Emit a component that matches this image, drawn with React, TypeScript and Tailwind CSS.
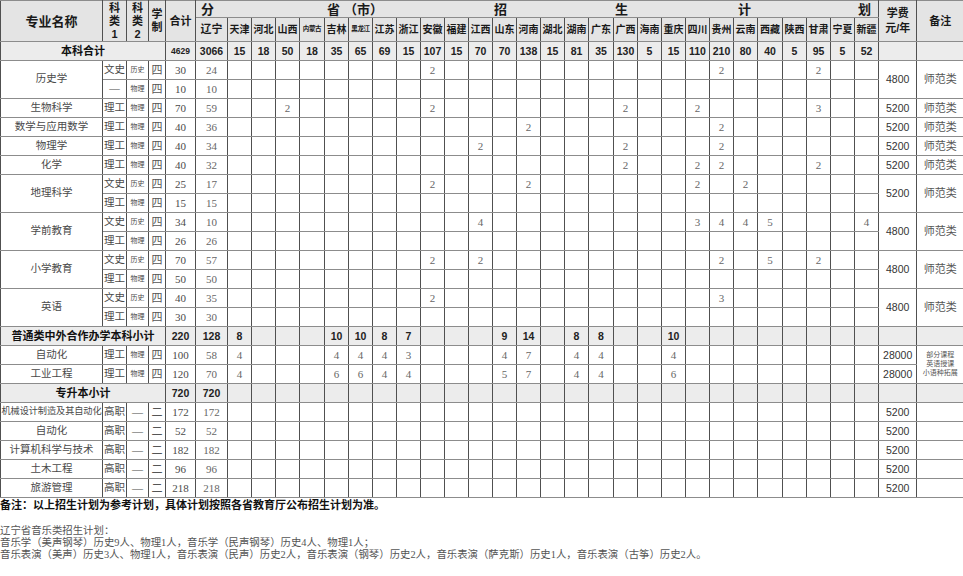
import React from "react";

const P = ["辽宁","天津","河北","山西","内蒙古","吉林","黑龙江","江苏","浙江","安徽","福建","江西","山东","河南","湖北","湖南","广东","广西","海南","重庆","四川","贵州","云南","西藏","陕西","甘肃","宁夏","新疆"];
const W25 = new Set(["内蒙古","广东","西藏"]);

type Row =
  | {
      kind: "row";
      name?: string;
      nameSpan?: number;
      small?: boolean;
      k1: string;
      k2: string;
      xz: string;
      total: string;
      v: Record<string, string>;
      fee?: string;
      feeSpan?: number;
      note?: React.ReactNode;
      noteSpan?: number;
    }
  | { kind: "sub"; label: string; total: string; v: Record<string, string>; smallTotal?: boolean };

const note2 = (
  <div className="flex flex-col items-center text-[7px] leading-[9px]">
    <span>部分课程</span>
    <span>英语授课</span>
    <span>小语种拓展</span>
  </div>
);

const rows: Row[] = [
  {
    kind: "sub",
    label: "本科合计",
    total: "4629",
    smallTotal: true,
    v: { 辽宁: "3066", 天津: "15", 河北: "18", 山西: "50", 内蒙古: "18", 吉林: "35", 黑龙江: "65", 江苏: "69", 浙江: "15", 安徽: "107", 福建: "15", 江西: "70", 山东: "70", 河南: "138", 湖北: "15", 湖南: "81", 广东: "35", 广西: "130", 海南: "5", 重庆: "15", 四川: "110", 贵州: "210", 云南: "80", 西藏: "40", 陕西: "5", 甘肃: "95", 宁夏: "5", 新疆: "52" },
  },
  { kind: "row", name: "历史学", nameSpan: 2, k1: "文史", k2: "历史", xz: "四", total: "30", v: { 辽宁: "24", 安徽: "2", 贵州: "2", 甘肃: "2" }, fee: "4800", feeSpan: 2, note: "师范类", noteSpan: 2 },
  { kind: "row", k1: "—", k2: "物理", xz: "四", total: "10", v: { 辽宁: "10" } },
  { kind: "row", name: "生物科学", k1: "理工", k2: "物理", xz: "四", total: "70", v: { 辽宁: "59", 山西: "2", 安徽: "2", 广西: "2", 四川: "2", 甘肃: "3" }, fee: "5200", note: "师范类" },
  { kind: "row", name: "数学与应用数学", k1: "理工", k2: "物理", xz: "四", total: "40", v: { 辽宁: "36", 河南: "2", 贵州: "2" }, fee: "5200", note: "师范类" },
  { kind: "row", name: "物理学", k1: "理工", k2: "物理", xz: "四", total: "40", v: { 辽宁: "34", 江西: "2", 广西: "2", 贵州: "2" }, fee: "5200", note: "师范类" },
  { kind: "row", name: "化学", k1: "理工", k2: "物理", xz: "四", total: "40", v: { 辽宁: "32", 广西: "2", 四川: "2", 贵州: "2", 甘肃: "2" }, fee: "5200", note: "师范类" },
  { kind: "row", name: "地理科学", nameSpan: 2, k1: "文史", k2: "历史", xz: "四", total: "25", v: { 辽宁: "17", 安徽: "2", 河南: "2", 四川: "2", 云南: "2" }, fee: "5200", feeSpan: 2, note: "师范类", noteSpan: 2 },
  { kind: "row", k1: "理工", k2: "物理", xz: "四", total: "15", v: { 辽宁: "15" } },
  { kind: "row", name: "学前教育", nameSpan: 2, k1: "文史", k2: "历史", xz: "四", total: "34", v: { 辽宁: "10", 江西: "4", 四川: "3", 贵州: "4", 云南: "4", 西藏: "5", 新疆: "4" }, fee: "4800", feeSpan: 2, note: "师范类", noteSpan: 2 },
  { kind: "row", k1: "理工", k2: "物理", xz: "四", total: "26", v: { 辽宁: "26" } },
  { kind: "row", name: "小学教育", nameSpan: 2, k1: "文史", k2: "历史", xz: "四", total: "70", v: { 辽宁: "57", 安徽: "2", 江西: "2", 贵州: "2", 西藏: "5", 甘肃: "2" }, fee: "4800", feeSpan: 2, note: "师范类", noteSpan: 2 },
  { kind: "row", k1: "理工", k2: "物理", xz: "四", total: "50", v: { 辽宁: "50" } },
  { kind: "row", name: "英语", nameSpan: 2, k1: "文史", k2: "历史", xz: "四", total: "40", v: { 辽宁: "35", 安徽: "2", 贵州: "3" }, fee: "4800", feeSpan: 2, note: "师范类", noteSpan: 2 },
  { kind: "row", k1: "理工", k2: "物理", xz: "四", total: "30", v: { 辽宁: "30" } },
  {
    kind: "sub",
    label: "普通类中外合作办学本科小计",
    total: "220",
    v: { 辽宁: "128", 天津: "8", 吉林: "10", 黑龙江: "10", 江苏: "8", 浙江: "7", 山东: "9", 河南: "14", 湖南: "8", 广东: "8", 重庆: "10" },
  },
  { kind: "row", name: "自动化", k1: "理工", k2: "物理", xz: "四", total: "100", v: { 辽宁: "58", 天津: "4", 吉林: "4", 黑龙江: "4", 江苏: "4", 浙江: "3", 山东: "4", 河南: "7", 湖南: "4", 广东: "4", 重庆: "4" }, fee: "28000", note: note2, noteSpan: 2 },
  { kind: "row", name: "工业工程", k1: "理工", k2: "物理", xz: "四", total: "120", v: { 辽宁: "70", 天津: "4", 吉林: "6", 黑龙江: "6", 江苏: "4", 浙江: "4", 山东: "5", 河南: "7", 湖南: "4", 广东: "4", 重庆: "6" }, fee: "28000" },
  { kind: "sub", label: "专升本小计", total: "720", v: { 辽宁: "720" } },
  { kind: "row", name: "机械设计制造及其自动化", small: true, k1: "高职", k2: "—", xz: "二", total: "172", v: { 辽宁: "172" }, fee: "5200", note: "" },
  { kind: "row", name: "自动化", k1: "高职", k2: "—", xz: "二", total: "52", v: { 辽宁: "52" }, fee: "5200", note: "" },
  { kind: "row", name: "计算机科学与技术", k1: "高职", k2: "—", xz: "二", total: "182", v: { 辽宁: "182" }, fee: "5200", note: "" },
  { kind: "row", name: "土木工程", k1: "高职", k2: "—", xz: "二", total: "96", v: { 辽宁: "96" }, fee: "5200", note: "" },
  { kind: "row", name: "旅游管理", k1: "高职", k2: "—", xz: "二", total: "218", v: { 辽宁: "218" }, fee: "5200", note: "" },
];

const cell = "p-0 text-center align-middle border border-x-[#505050] border-y-[#8c8c8c] leading-none overflow-hidden";
const cjk = "font-['Liberation_Sans','Noto_Sans_CJK_SC',sans-serif]";
const serifCjk = "font-['Liberation_Serif','Noto_Sans_CJK_SC',serif]";
const num = "font-['Liberation_Serif','Noto_Sans_CJK_SC',serif]";
const bnum = "font-['Liberation_Sans','Noto_Sans_CJK_SC',sans-serif] font-bold";

export default function App() {
  return (
    <div className="w-[963px] h-[576px] bg-white overflow-hidden text-[#222]">
      <table className="table-fixed border-collapse w-[963px]">
        <colgroup>
          <col className="w-[102px]" />
          <col className="w-[24px]" />
          <col className="w-[22px]" />
          <col className="w-[17px]" />
          <col className="w-[30px]" />
          {P.map((p) => (
            <col key={p} className={p === "辽宁" ? "w-[32px]" : W25.has(p) ? "w-[25px]" : "w-[24px]"} />
          ))}
          <col className="w-[38px]" />
          <col className="w-[47px]" />
        </colgroup>
        <thead className={`bg-[#e4e4e4] ${cjk} font-bold text-[#1a1a1a]`}>
          <tr className="h-[17px]">
            <th rowSpan={2} className={`${cell} text-[13px]`}>专业名称</th>
            <th rowSpan={2} className={`${cell} text-[11px]`}>
              <div className="flex flex-col items-center leading-[13px]">
                <span>科</span>
                <span>类</span>
                <span>1</span>
              </div>
            </th>
            <th rowSpan={2} className={`${cell} text-[11px]`}>
              <div className="flex flex-col items-center leading-[13px]">
                <span>科</span>
                <span>类</span>
                <span>2</span>
              </div>
            </th>
            <th rowSpan={2} className={`${cell} text-[11px]`}>
              <div className="flex flex-col items-center leading-[13px]">
                <span>学</span>
                <span>制</span>
              </div>
            </th>
            <th rowSpan={2} className={`${cell} text-[11px]`}>合计</th>
            <th colSpan={28} className={`${cell} text-[13px] text-left`}>
              <div className="flex items-center whitespace-nowrap">
                <span className="ml-[5px]">分</span>
                <span className="ml-[113px]">省</span>
                <span className="ml-[4px]">（市）</span>
                <span className="ml-[111px]">招</span>
                <span className="ml-[108px]">生</span>
                <span className="ml-[110px]">计</span>
                <span className="ml-[107px]">划</span>
              </div>
            </th>
            <th rowSpan={2} className={`${cell} text-[11px]`}>
              <div className="flex flex-col items-center leading-[15px]">
                <span>学费</span>
                <span>元/年</span>
              </div>
            </th>
            <th rowSpan={2} className={`${cell} text-[11px]`}>备注</th>
          </tr>
          <tr className="h-[24px]">
            {P.map((p) => (
              <th
                key={p}
                className={`${cell} whitespace-nowrap ${p === "内蒙古" || p === "黑龙江" ? "text-[6.5px] tracking-[-0.3px]" : p === "辽宁" ? "text-[11px]" : "text-[10px]"}`}
              >
                {p}
              </th>
            ))}
          </tr>
        </thead>
        <tbody>
          {rows.map((r, i) =>
            r.kind === "sub" ? (
              <tr key={i} className="h-[19px] bg-[#ececec]">
                <td colSpan={4} className={`${cell} ${cjk} font-bold text-[11px] text-[#111] whitespace-nowrap`}>{r.label}</td>
                <td className={`${cell} ${bnum} ${r.smallTotal ? "text-[8.5px]" : "text-[10.5px]"}`}>{r.total}</td>
                {P.map((p) => (
                  <td key={p} className={`${cell} ${bnum} text-[10.5px]`}>{r.v[p] ?? ""}</td>
                ))}
                <td className={cell}></td>
                <td className={cell}></td>
              </tr>
            ) : (
              <tr key={i} className="h-[19px] text-[#4a4a4a]">
                {r.name !== undefined && (
                  <td rowSpan={r.nameSpan} className={`${cell} ${serifCjk} whitespace-nowrap ${r.small ? "text-[9.2px] tracking-[-0.1px]" : "text-[10.5px]"}`}>
                    {r.name}
                  </td>
                )}
                <td className={`${cell} ${serifCjk} text-[10.5px]`}>{r.k1}</td>
                <td className={`${cell} ${serifCjk} ${r.k2 === "—" ? "text-[11px]" : "text-[7px]"}`}>{r.k2}</td>
                <td className={`${cell} ${serifCjk} text-[11px] text-[#555]`}>{r.xz}</td>
                <td className={`${cell} ${num} text-[11px]`}>{r.total}</td>
                {P.map((p) => (
                  <td key={p} className={`${cell} ${num} text-[11px] text-[#666]`}>{r.v[p] ?? ""}</td>
                ))}
                {r.fee !== undefined && (
                  <td rowSpan={r.feeSpan} className={`${cell} font-['Liberation_Sans',sans-serif] text-[10.5px] text-[#333]`}>{r.fee}</td>
                )}
                {r.note !== undefined && (
                  <td rowSpan={r.noteSpan} className={`${cell} ${serifCjk} text-[11px] text-[#555]`}>{r.note}</td>
                )}
              </tr>
            )
          )}
        </tbody>
      </table>
      <div className={`${cjk} text-[11px] leading-[14px] font-bold text-[#111] whitespace-nowrap`}>
        备注：以上招生计划为参考计划，具体计划按照各省教育厅公布招生计划为准。
      </div>
      <div className={`mt-[13px] ${serifCjk} text-[10.4px] leading-[12px] text-[#555] whitespace-nowrap`}>
        <div>辽宁省音乐类招生计划：</div>
        <div>音乐学（美声钢琴）历史9人、物理1人，音乐学（民声钢琴）历史4人、物理1人；</div>
        <div>音乐表演（美声）历史3人、物理1人，音乐表演（民声）历史2人，音乐表演（钢琴）历史2人，音乐表演（萨克斯）历史1人，音乐表演（古筝）历史2人。</div>
      </div>
    </div>
  );
}
